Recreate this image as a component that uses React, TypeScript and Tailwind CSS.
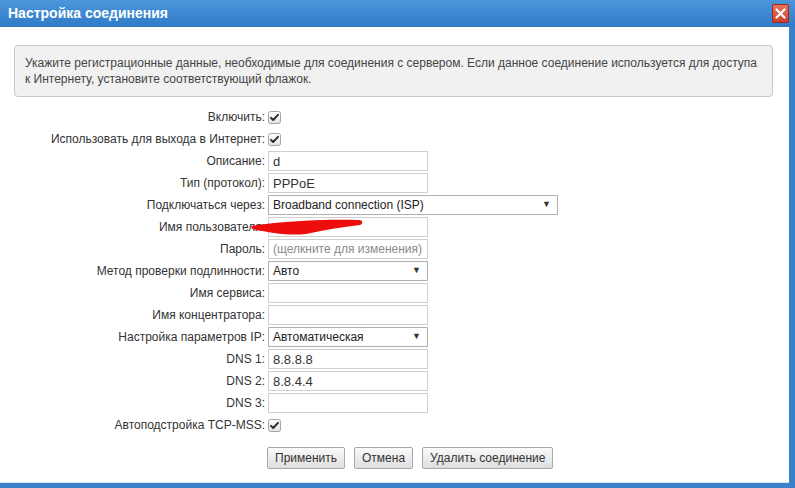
import type { ReactNode } from 'react'

function Check() {
  return (
    <svg width="13" height="13" viewBox="0 0 13 13" className="block">
      <defs>
        <linearGradient id="cb" x1="0" y1="0" x2="0" y2="1">
          <stop offset="0" stopColor="#ffffff" />
          <stop offset="1" stopColor="#e2e2e2" />
        </linearGradient>
      </defs>
      <rect x="0.5" y="0.5" width="12" height="12" rx="2" fill="url(#cb)" stroke="#a5a5a5" />
      <path d="M3 6.8 L5.2 9 L10 3.8" fill="none" stroke="#2b2b2b" strokeWidth="1.9" strokeLinecap="round" strokeLinejoin="round" />
    </svg>
  )
}

function Row({ label, children }: { label: string; children: ReactNode }) {
  return (
    <div className="flex h-[22px] items-center">
      <div className="w-[268px] shrink-0 text-right pr-[3px]">{label}</div>
      {children}
    </div>
  )
}

function Input({ value, placeholder }: { value?: string; placeholder?: string }) {
  return (
    <div className="w-[160px] h-[20px] border border-[#cfcfcf] bg-white px-[4px] flex items-center text-[13px] leading-none">
      {value ? <span className="text-[#333]">{value}</span> : <span className="text-[#8a8a8a] text-[12px]">{placeholder}</span>}
    </div>
  )
}

function Select({ value, wide }: { value: string; wide?: boolean }) {
  return (
    <div className={`${wide ? 'w-[290px]' : 'w-[160px]'} h-[20px] border border-[#b0b0b0] bg-white pl-[4px] pr-[6px] flex items-center justify-between`}>
      <span className="text-[#222]">{value}</span>
      <span className="text-[9px] text-[#333]">▼</span>
    </div>
  )
}

function Btn({ children }: { children: ReactNode }) {
  return (
    <button className="h-[22px] px-[7px] border border-[#a8a8a8] rounded-[2px] bg-gradient-to-b from-[#fafafa] to-[#dedede] text-[12px] text-[#333]">
      {children}
    </button>
  )
}

export default function App() {
  return (
    <div className="w-[795px] h-[488px] flex flex-col bg-white font-['Liberation_Sans',Arial,sans-serif] text-[12px] text-[#333] overflow-hidden">
      {/* Title bar */}
      <div className="h-[27px] shrink-0 flex items-center justify-between pl-[8px] pr-[6px] bg-gradient-to-b from-[#4d96dc] to-[#2f7bc6]">
        <span className="text-white font-bold text-[14px]">Настройка соединения</span>
        <div className="w-[17px] h-[19px] mt-[-1px] rounded-[2px] border border-[#9e2a1c] bg-gradient-to-b from-[#e9755c] to-[#c9412a] flex items-center justify-center">
          <svg width="11" height="11" viewBox="0 0 11 11">
            <path d="M1.5 1.5 L9.5 9.5 M9.5 1.5 L1.5 9.5" stroke="#fff" strokeWidth="2.2" strokeLinecap="round" />
          </svg>
        </div>
      </div>

      {/* Body */}
      <div className="relative flex-1 flex flex-col border-r-[6px] border-b-[5px] border-[#3a81c9]">
        <div className="flex-1 flex flex-col border-b border-[#d6e5f4]">
          <div className="mt-[18px] ml-[14px] mr-[16px] rounded-[4px] border border-[#c8c8c8] bg-[#f1f1f1] px-[10px] py-[9px] leading-[16px] text-[12px] text-[#444]">
            Укажите регистрационные данные, необходимые для соединения с сервером. Если данное соединение используется для доступа к Интернету, установите соответствующий флажок.
          </div>

          <div className="mt-[9px] flex flex-col">
            <Row label="Включить:"><Check /></Row>
            <Row label="Использовать для выхода в Интернет:"><Check /></Row>
            <Row label="Описание:"><Input value="d" /></Row>
            <Row label="Тип (протокол):"><Input value="PPPoE" /></Row>
            <Row label="Подключаться через:"><Select value="Broadband connection (ISP)" wide /></Row>
            <Row label="Имя пользователя:"><Input /></Row>
            <Row label="Пароль:"><Input placeholder="(щелкните для изменения)" /></Row>
            <Row label="Метод проверки подлинности:"><Select value="Авто" /></Row>
            <Row label="Имя сервиса:"><Input /></Row>
            <Row label="Имя концентратора:"><Input /></Row>
            <Row label="Настройка параметров IP:"><Select value="Автоматическая" /></Row>
            <Row label="DNS 1:"><Input value="8.8.8.8" /></Row>
            <Row label="DNS 2:"><Input value="8.8.4.4" /></Row>
            <Row label="DNS 3:"><Input /></Row>
            <Row label="Автоподстройка TCP-MSS:"><Check /></Row>
          </div>

          <div className="mt-[11px] pl-[267px] flex gap-[9px]">
            <Btn>Применить</Btn>
            <Btn>Отмена</Btn>
            <Btn>Удалить соединение</Btn>
          </div>
        </div>

        {/* red marker scribble */}
        <svg className="absolute left-[250px] top-[191px] pointer-events-none" width="115" height="20" viewBox="0 0 115 20">
          <path d="M1 8 C30 3 80 1 110 2 C113 3 113 6 110 7 C92 9 74 12 56 16 C38 18 18 14 2 11 Z" fill="#ee0d0d" />
        </svg>
      </div>
    </div>
  )
}
